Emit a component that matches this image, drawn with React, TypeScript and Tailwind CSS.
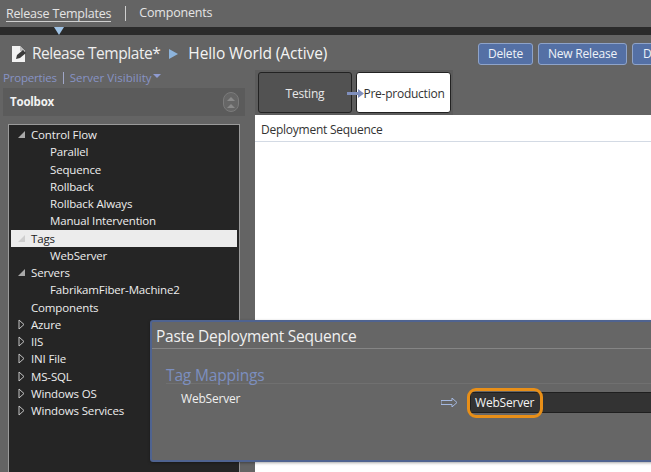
import type { ReactNode } from 'react';

const font = { sans: "font-['Open_Sans','Noto_Sans',sans-serif]" };

function Caret({ open, faint }: { open?: boolean; faint?: boolean }) {
  if (open) {
    return (
      <svg width="9" height="9" viewBox="0 0 9 9" className="shrink-0">
        <path d="M8 1V8H1Z" fill={faint ? '#cfcfcf' : '#a9a9a9'} />
      </svg>
    );
  }
  return (
    <svg width="9" height="11" viewBox="0 0 9 11" className="shrink-0">
      <path d="M2 1L7 5.5L2 10Z" fill="none" stroke="#c4c4c4" />
    </svg>
  );
}

function Row({ children, caret, child, selected }: { children: ReactNode; caret?: 'open' | 'closed'; child?: boolean; selected?: boolean }) {
  return (
    <div className={`flex h-[17.25px] items-center ${selected ? 'bg-[#ececec] text-[#222]' : 'text-[#ededed]'}`}>
      <div className="flex w-[20px] justify-end pr-[5px]">
        {caret && <Caret open={caret === 'open'} faint={selected} />}
      </div>
      <span className={`whitespace-nowrap text-[11.5px] tracking-[-0.15px] ${child ? 'pl-[19px]' : ''}`}>{children}</span>
    </div>
  );
}

function BlueButton({ children, className = '' }: { children: ReactNode; className?: string }) {
  return (
    <button className={`h-[22px] shrink-0 rounded-[3px] border border-[#8ea3c9] bg-[#5470a5] text-[12px] tracking-[-0.2px] text-[#eef2f8] ${className}`}>
      {children}
    </button>
  );
}

export default function App() {
  return (
    <div className={`relative h-[472px] w-[651px] overflow-hidden bg-[#646464] ${font.sans}`}>
      {/* Top nav */}
      <div className="flex h-[27px] items-center pl-[6px] text-[12.5px] tracking-[-0.2px] text-[#e4e4e4]">
        <span className="border-b border-[#cfcfcf] leading-[15px]">Release Templates</span>
        <span className="ml-[14px] mr-[13px] h-[15px] w-px bg-[#cfcfcf]" />
        <span>Components</span>
      </div>
      <div className="relative h-[8px] bg-[#2b2b2b]">
        <div className="absolute left-[54px] top-0 h-0 w-0 border-x-[5px] border-t-[8px] border-x-transparent border-t-[#9fc3e6]" />
      </div>

      {/* Title row */}
      <div className="flex h-[35px] items-center pt-[3px]">
        <div className="flex w-[478px] shrink-0 items-center">
          <svg width="16" height="18" viewBox="0 0 16 18" className="ml-[11px] shrink-0">
            <path d="M1 1H9L14 6V17H1Z" fill="#f2f2f2" />
            <path d="M9 1V6H14" fill="#bdbdbd" />
            <path d="M5 14L6 10L12 5L15 8L9 13Z" fill="#3c3c3c" />
          </svg>
          <span className="ml-[5px] whitespace-nowrap text-[15.5px] tracking-[-0.45px] text-[#efefef]">Release Template*</span>
          <svg width="9" height="10" viewBox="0 0 9 10" className="ml-[9px] shrink-0">
            <path d="M0 0L9 5L0 10Z" fill="#8db4dc" />
          </svg>
          <span className="ml-[10px] whitespace-nowrap text-[15.5px] tracking-[-0.1px] text-[#f4f4f4]">Hello World (Active)</span>
        </div>
        <div className="flex shrink-0 gap-[5px]">
          <BlueButton className="w-[55px]">Delete</BlueButton>
          <BlueButton className="w-[89px]">New Release</BlueButton>
          <BlueButton className="w-[60px]">Deploy</BlueButton>
        </div>
      </div>

      {/* Main */}
      <div className="flex h-[402px]">
        <div className="w-[255px] shrink-0">
          <div className="flex h-[15px] items-center pl-[3px] text-[11.5px] tracking-[-0.2px] text-[#8793c4]">
            <span>Properties</span>
            <span className="mx-[6px] h-[12px] w-px bg-[#a0a7c8]" />
            <span className="tracking-[0.05px]">Server Visibility</span>
            <span className="ml-[1px] mb-[3px] h-0 w-0 border-x-[4px] border-t-[4px] border-x-transparent border-t-[#8f9bd0]" />
          </div>
          <div className="ml-[3px] mt-[3px] flex h-[28px] w-[242px] items-center justify-between bg-[#5b5b5b] pl-[7px] pr-[6px]">
            <span className="text-[11.5px] font-bold tracking-[-0.2px] text-[#f2f2f2]">Toolbox</span>
            <span className="flex h-[20px] w-[16px] flex-col items-center justify-center gap-[2px] rounded-full border border-[#7b7b7b] bg-[#666]">
              <svg width="10" height="5" viewBox="0 0 10 5"><path d="M1 5L5 1L9 5Z" fill="#8a8a8a" /></svg>
              <svg width="10" height="5" viewBox="0 0 10 5"><path d="M1 5L5 1L9 5Z" fill="#8a8a8a" /></svg>
            </span>
          </div>
          <div className="ml-[8px] mt-[8px] h-[351px] w-[232px] border border-[#9a9a9a] bg-[#252525] px-[2px] pt-[1px]">
            <Row caret="open">Control Flow</Row>
            <Row child>Parallel</Row>
            <Row child>Sequence</Row>
            <Row child>Rollback</Row>
            <Row child>Rollback Always</Row>
            <Row child>Manual Intervention</Row>
            <Row caret="open" selected>Tags</Row>
            <Row child>WebServer</Row>
            <Row caret="open">Servers</Row>
            <Row child>FabrikamFiber-Machine2</Row>
            <Row>Components</Row>
            <Row caret="closed">Azure</Row>
            <Row caret="closed">IIS</Row>
            <Row caret="closed">INI File</Row>
            <Row caret="closed">MS-SQL</Row>
            <Row caret="closed">Windows OS</Row>
            <Row caret="closed">Windows Services</Row>
          </div>
        </div>

        <div className="flex min-w-0 flex-1 flex-col">
          <div className="h-[45px]">
            <div className="flex h-[45px] w-[198px] items-center gap-[4px] bg-[#5c5c5c] pl-[3px]">
              <div className="flex h-[41px] w-[94px] items-center justify-center rounded-[3px] border border-[#222] bg-[#525252] pt-[2px] text-[12px] tracking-[-0.2px] text-[#e8e8e8]">
                Testing
              </div>
              <div className="relative flex h-[41px] w-[95px] items-center justify-center rounded-[3px] border border-[#222] bg-white pl-[1px] pt-[2px] text-[12px] tracking-[-0.25px] text-[#333]">
                <svg width="17" height="9" viewBox="0 0 17 9" className="absolute -left-[10px] top-[16px]">
                  <path d="M0 3H11V0L17 4.5L11 9V6H0Z" fill="#7f8fbd" />
                </svg>
                Pre-production
              </div>
            </div>
          </div>
          <div className="flex-1 bg-white">
            <div className="flex h-[27px] items-center border-b border-[#d3dae4] pl-[6px] pt-[3px] text-[12px] tracking-[-0.25px] text-[#333]">
              Deployment Sequence
            </div>
          </div>
        </div>
      </div>

      {/* Paste dialog */}
      <div className="absolute left-[150px] top-[320px] h-[142px] w-[510px] rounded-[3px] border-2 border-[#4f6390] bg-[#666] shadow-[0_1px_3px_rgba(0,0,0,0.35)]">
        <div className="flex h-[27px] items-center border-b border-[#858585] pl-[4px] pt-[3px] text-[15.5px] tracking-[-0.25px] text-[#f0f0f0]">
          Paste Deployment Sequence
        </div>
        <div className="ml-[14px] mt-[18px] border-b border-[#707070] pt-[1px] text-[15.5px] leading-[15px] tracking-[-0.15px] text-[#7c8fc0]">
          Tag Mappings
        </div>
        <div className="ml-[29px] mt-[8px] flex items-start">
          <span className="w-[260px] shrink-0 pt-[1px] text-[12px] leading-[12px] tracking-[-0.2px] text-[#efefef]">WebServer</span>
          <svg width="17" height="9" viewBox="0 0 17 9" className="mt-[6px] shrink-0">
            <path d="M0 2.5H11V0L16 4.5L11 9V6.5H0Z" fill="none" stroke="#a4b8e0" />
          </svg>
          <div className="relative ml-[12px] flex h-[21px] w-[300px] shrink-0 items-center border border-[#1f1f1f] bg-[#333] pl-[4px] text-[12px] tracking-[-0.2px] text-[#f4f4f4]">
            WebServer
            <div className="absolute -left-[4px] -top-[5px] h-[30px] w-[76px] rounded-[9px] border-[3px] border-[#e88f18]" />
          </div>
        </div>
      </div>
    </div>
  );
}
